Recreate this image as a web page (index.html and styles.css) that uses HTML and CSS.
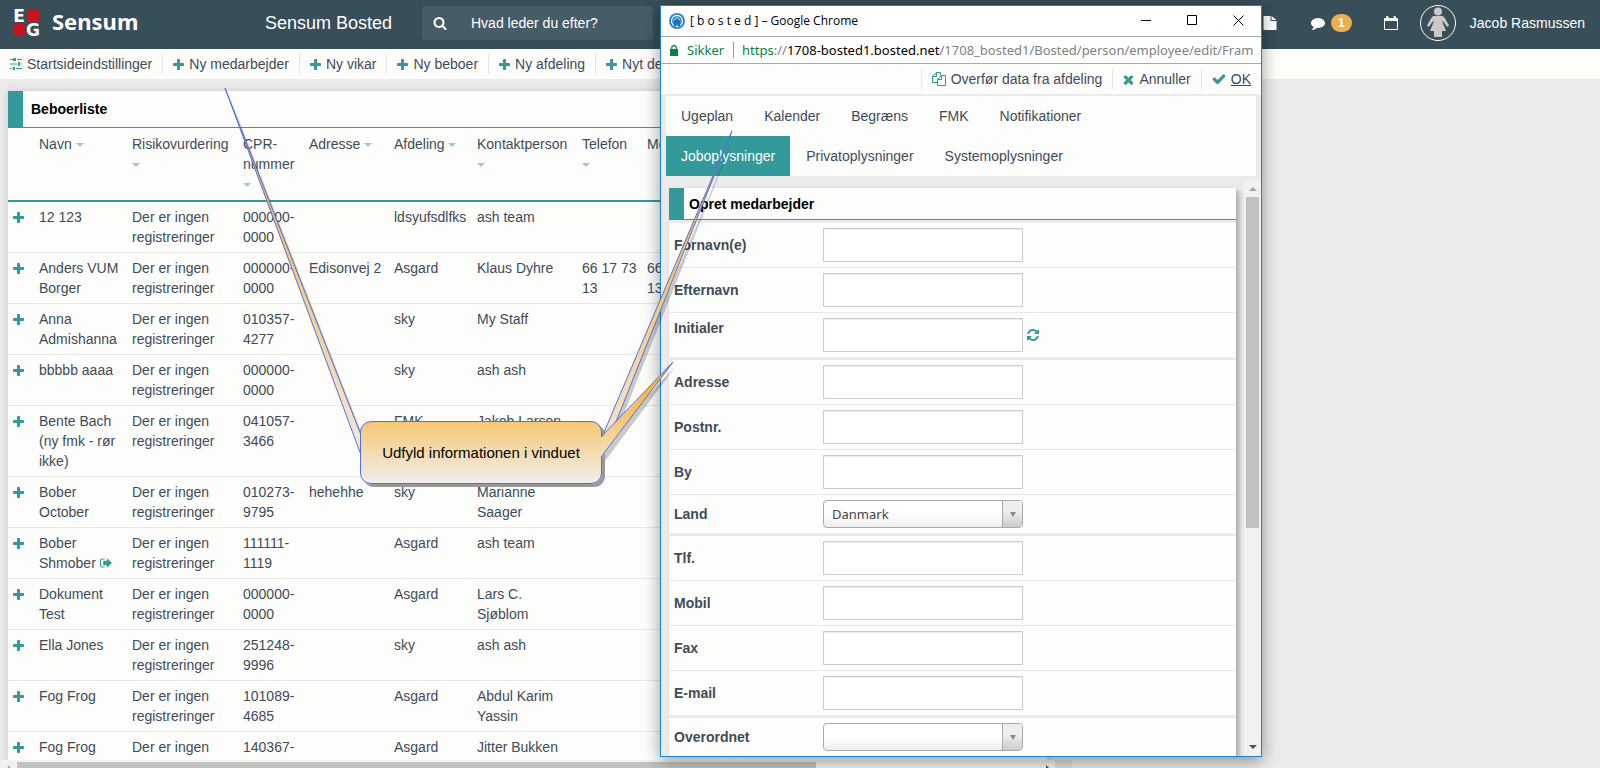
FILE: index.html
```html
<!DOCTYPE html>
<html lang="da">
<head>
<meta charset="utf-8">
<title>Sensum Bosted</title>
<link rel="stylesheet" href="styles.css">
</head>
<body>
<svg class="sprite" aria-hidden="true">
  <symbol id="i-plus" viewBox="192 128 1408 1408"><path d="M1600 736v192q0 40-28 68t-68 28h-416v416q0 40-28 68t-68 28h-192q-40 0-68-28t-28-68v-416h-416q-40 0-68-28t-28-68v-192q0-40 28-68t68-28h416v-416q0-40 28-68t68-28h192q40 0 68 28t28 68v416h416q40 0 68 28t28 68z"/></symbol>
  <symbol id="i-search" viewBox="0 0 1792 1792"><path d="M1216 832q0-185-131.5-316.5t-316.5-131.5-316.5 131.5-131.5 316.5 131.5 316.5 316.5 131.5 316.5-131.5 131.5-316.5zm512 832q0 52-38 90t-90 38q-54 0-90-38l-343-342q-179 124-399 124-143 0-273.5-55.5t-225-150-150-225-55.5-273.5 55.5-273.5 150-225 225-150 273.5-55.5 273.5 55.5 225 150 150 225 55.5 273.5q0 220-124 399l343 343q37 37 37 90z"/></symbol>
  <symbol id="i-check" viewBox="64 64 1664 1664"><path d="M1671 566q0 40-28 68l-724 724-136 136q-28 28-68 28t-68-28l-136-136-362-362q-28-28-28-68t28-68l136-136q28-28 68-28t68 28l294 295 656-657q28-28 68-28t68 28l136 136q28 28 28 68z"/></symbol>
  <symbol id="i-times" viewBox="224 224 1344 1344"><path d="M1490 1322q0 40-28 68l-136 136q-28 28-68 28t-68-28l-294-294-294 294q-28 28-68 28t-68-28l-136-136q-28-28-28-68t28-68l294-294-294-294q-28-28-28-68t28-68l136-136q28-28 68-28t68 28l294 294 294-294q28-28 68-28t68 28l136 136q28 28 28 68t-28 68l-294 294 294 294q28 28 28 68z"/></symbol>
  <symbol id="i-refresh" viewBox="128 128 1536 1536"><path d="M1639 1056q0 5-1 7-64 268-268 434.5t-478 166.5q-146 0-282.5-55t-243.5-157l-129 129q-19 19-45 19t-45-19-19-45v-448q0-26 19-45t45-19h448q26 0 45 19t19 45-19 45l-137 137q71 66 161 102t187 36q134 0 250-65t186-179q11-17 53-117 8-23 30-23h192q13 0 22.500 9.500t9.500 22.500zm25-800v448q0 26-19 45t-45 19h-448q-26 0-45-19t-19-45 19-45l138-138q-148-137-349-137-134 0-250 65t-186 179q-11 17-53 117-8 23-30 23h-199q-13 0-22.500-9.500t-9.500-22.500v-7q65-268 270-434.500t480-166.500q146 0 284 55.500t245 156.500l130-129q19-19 45-19t45 19 19 45z"/></symbol>
  <symbol id="i-comment" viewBox="0 0 1792 1792"><path d="M1792 896q0 174-120 321.5t-326 233-450 85.5q-70 0-145-8-198 175-460 242-49 14-114 22-17 2-30.5-9t-17.5-29v-1q-3-4-.5-12t2-10 4.500-9.500l6-9 7-8.500 8-9q7-8 31-34.500t34.500-38 31-39.500 32.500-51 27-59 26-76q-157-89-247.500-220t-90.500-281q0-130 71-248.500t191-204.500 286-136.500 348-50.500q244 0 450 85.500t326 233 120 321.500z"/></symbol>
  <symbol id="i-sliders" viewBox="0 0 12 12"><path d="M0 1h3v1H0zM7 1h5v1H7zM0 5.500h7v1H0zM11 5.500h1v1h-1zM0 10h2v1H0zM6 10h6v1H6zM3 0h3v3H3zM8 4h2v4H8zM3 9h2v3H3z"/></symbol>
  <symbol id="i-signout" viewBox="0 0 13 12"><path d="M5 1H2.500A2.500 2.500 0 0 0 0 3.500v5A2.500 2.500 0 0 0 2.500 11H5V9.800H2.500A1.300 1.300 0 0 1 1.200 8.500v-5A1.300 1.300 0 0 1 2.500 2.200H5zM7.500 .8 13 6l-5.500 5.200V8.500H3.500v-5h4z"/></symbol>
  <symbol id="i-copy" viewBox="0 0 14 14"><path fill="none" stroke="currentColor" d="M5.500 10.500h-5v-6l4-4h4v3M4.500 .5v4h-4M5.500 7.500l4-4h4v10h-8zM9.500 3.500v4h-4"/></symbol>
  <symbol id="i-file" viewBox="0 0 13 14"><path d="M0 0h7v5h6v9H0zM8 0l5 4H8z"/></symbol>
  <symbol id="i-calendar" viewBox="0 0 14 14"><path d="M0 3q0-1 1-1h1V1q0-1 1.200-1T4.500 1v1h5V1q0-1 1.200-1T12 1v1h1q1 0 1 1v10q0 1-1 1H1q-1 0-1-1zm1 2v8h12V5z" fill-rule="evenodd"/></symbol>
  <symbol id="i-woman" viewBox="0 0 24 32"><circle cx="12" cy="4.500" r="4"/><path d="M8.500 9h7c1.500 0 2.200.6 3 1.800l4.200 7c.7 1.400-1.300 2.600-2.200 1.300L16.500 13.500v1.700L20 24h-4v6h-8v-6H4l3.500-8.800v-1.700L3.500 19.100c-.9 1.300-2.900.1-2.200-1.300l4.200-7C6.300 9.600 7 9 8.500 9z"/></symbol>
</svg>

<header class="topbar">
  <a class="logo" href="#">
    <span class="eg" aria-hidden="true"><b>E</b><i></i><i></i><b>G</b></span>
    <span class="logo-name">Sensum</span>
  </a>
  <h1 class="app-title">Sensum Bosted</h1>
  <label class="search">
    <svg class="icon icon-lg"><use href="#i-search"/></svg>
    <input type="text" placeholder="Hvad leder du efter?" aria-label="Søg">
  </label>
  <div class="user-tools">
    <button class="tool tool-file" aria-label="Dokumenter"><svg class="icon icon-lg"><use href="#i-file"/></svg></button>
    <button class="tool tool-msg" aria-label="Beskeder"><svg class="icon icon-lg"><use href="#i-comment"/></svg><span class="badge">1</span></button>
    <button class="tool tool-cal" aria-label="Kalender"><svg class="icon icon-lg"><use href="#i-calendar"/></svg></button>
    <span class="avatar"><svg><use href="#i-woman"/></svg></span>
    <span class="user-name">Jacob Rasmussen</span>
  </div>
</header>

<nav class="actions">
  <a href="#"><svg class="icon icon-md"><use href="#i-sliders"/></svg>Startsideindstillinger</a>
  <a href="#"><svg class="icon"><use href="#i-plus"/></svg>Ny medarbejder</a>
  <a href="#"><svg class="icon"><use href="#i-plus"/></svg>Ny vikar</a>
  <a href="#"><svg class="icon"><use href="#i-plus"/></svg>Ny beboer</a>
  <a href="#"><svg class="icon"><use href="#i-plus"/></svg>Ny afdeling</a>
  <a href="#"><svg class="icon"><use href="#i-plus"/></svg>Nyt de</a>
</nav>

<main class="frame">
  <div class="frame-body">
    <section class="panel">
      <h2 class="panel-title">Beboerliste</h2>
      <table class="residents">
        <colgroup><col class="c-add"><col class="c-name"><col class="c-risk"><col class="c-cpr"><col class="c-addr"><col class="c-dept"><col class="c-contact"><col class="c-phone"><col></colgroup>
        <thead>
          <tr><th></th><th>Navn <i class="sort"></i></th><th>Risikovurdering <i class="sort"></i></th><th>CPR-nummer <i class="sort"></i></th><th>Adresse <i class="sort"></i></th><th>Afdeling <i class="sort"></i></th><th>Kontaktperson <i class="sort"></i></th><th>Telefon <i class="sort"></i></th><th>Mobil</th></tr>
        </thead>
        <tbody>
          <tr><td><svg class="icon"><use href="#i-plus"/></svg></td><td>12 123</td><td>Der er ingen registreringer</td><td>000000-<wbr>0000</td><td></td><td>ldsyufsdlfks</td><td>ash team</td><td></td><td></td></tr>
          <tr><td><svg class="icon"><use href="#i-plus"/></svg></td><td>Anders VUM Borger</td><td>Der er ingen registreringer</td><td>000000-<wbr>0000</td><td>Edisonvej 2</td><td>Asgard</td><td>Klaus Dyhre</td><td>66 17 73 13</td><td>66 17 73<br>13</td></tr>
          <tr><td><svg class="icon"><use href="#i-plus"/></svg></td><td>Anna Admishanna</td><td>Der er ingen registreringer</td><td>010357-<wbr>4277</td><td></td><td>sky</td><td>My Staff</td><td></td><td></td></tr>
          <tr><td><svg class="icon"><use href="#i-plus"/></svg></td><td>bbbbb aaaa</td><td>Der er ingen registreringer</td><td>000000-<wbr>0000</td><td></td><td>sky</td><td>ash ash</td><td></td><td></td></tr>
          <tr><td><svg class="icon"><use href="#i-plus"/></svg></td><td>Bente Bach (ny fmk - rør ikke)</td><td>Der er ingen registreringer</td><td>041057-<wbr>3466</td><td></td><td>FMK</td><td>Jakob Larsen</td><td></td><td></td></tr>
          <tr><td><svg class="icon"><use href="#i-plus"/></svg></td><td>Bober October</td><td>Der er ingen registreringer</td><td>010273-<wbr>9795</td><td>hehehhe</td><td>sky</td><td>Marianne Saager</td><td></td><td></td></tr>
          <tr><td><svg class="icon"><use href="#i-plus"/></svg></td><td>Bober Shmober <svg class="icon icon-md"><use href="#i-signout"/></svg></td><td>Der er ingen registreringer</td><td>111111-<wbr>1119</td><td></td><td>Asgard</td><td>ash team</td><td></td><td></td></tr>
          <tr><td><svg class="icon"><use href="#i-plus"/></svg></td><td>Dokument Test</td><td>Der er ingen registreringer</td><td>000000-<wbr>0000</td><td></td><td>Asgard</td><td>Lars C. Sjøblom</td><td></td><td></td></tr>
          <tr><td><svg class="icon"><use href="#i-plus"/></svg></td><td>Ella Jones</td><td>Der er ingen registreringer</td><td>251248-<wbr>9996</td><td></td><td>sky</td><td>ash ash</td><td></td><td></td></tr>
          <tr><td><svg class="icon"><use href="#i-plus"/></svg></td><td>Fog Frog</td><td>Der er ingen registreringer</td><td>101089-<wbr>4685</td><td></td><td>Asgard</td><td>Abdul Karim Yassin</td><td></td><td></td></tr>
          <tr><td><svg class="icon"><use href="#i-plus"/></svg></td><td>Fog Frog</td><td>Der er ingen</td><td>140367-</td><td></td><td>Asgard</td><td>Jitter Bukken</td><td></td><td></td></tr>
        </tbody>
      </table>
    </section>
  </div>
  <div class="hscroll"><i class="arrow-left"></i><span class="hthumb"></span><i class="arrow-right"></i><span class="hcorner"></span></div>
</main>

<section class="window" aria-label="Opret medarbejder">
  <header class="win-title">
    <svg class="win-logo" viewBox="0 0 16 16"><circle cx="8" cy="8" r="8" fill="#2b86c3"/><circle cx="8" cy="8" r="5.500" fill="#2b86c3" stroke="#e4f3fc" stroke-width="1.300"/><path d="M8 3.500l4.500 4.500h-1.500v5.500h-2v-3h-2v3H5V8H3.500z" fill="#1273b5"/><path d="M4.500 7.500 8 4.500l3.500 3" fill="none" stroke="#e4f3fc"/></svg>
    <span class="win-name">[ b o s t e d ] – Google Chrome</span>
    <button aria-label="Minimer"><svg viewBox="0 0 11 11"><path d="M0 5.500h10"/></svg></button>
    <button aria-label="Maksimer"><svg viewBox="0 0 11 11"><path d="M.5 .5h9v9h-9z"/></svg></button>
    <button aria-label="Luk"><svg viewBox="0 0 11 11"><path d="M.5 .5l10 10M10.500 .5l-10 10"/></svg></button>
  </header>
  <div class="win-url">
    <svg class="lock" viewBox="0 0 8 11"><path d="M0 4h8v7H0z"/><path d="M1.700 4.500V3a2.300 2.300 0 0 1 4.600 0v1.500" fill="none" stroke="#0b8043" stroke-width="1.200"/></svg>
    <span class="secure">Sikker</span>
    <span class="url"><span class="secure">https</span>://<b>1708-bosted1.bosted.net</b>/1708_bosted1/Bosted/person/employee/edit/Fram</span>
  </div>
  <div class="actions win-actions">
    <a href="#"><svg class="icon icon-lg"><use href="#i-copy"/></svg>Overfør data fra afdeling</a>
    <a href="#"><svg class="icon"><use href="#i-times"/></svg>Annuller</a>
    <a href="#"><svg class="icon icon-lg"><use href="#i-check"/></svg><u>OK</u></a>
  </div>
  <nav class="tabs">
    <a href="#">Ugeplan</a><a href="#">Kalender</a><a href="#">Begræns</a><a href="#">FMK</a><a href="#">Notifikationer</a>
    <a href="#" class="active">Joboplysninger</a><a href="#">Privatoplysninger</a><a href="#">Systemoplysninger</a>
  </nav>
  <div class="win-body">
    <form class="form">
      <h2 class="panel-title form-title">Opret medarbejder</h2>
      <fieldset>
        <div class="row"><label for="fn">Fornavn(e)</label><input id="fn" type="text"></div>
        <div class="row"><label for="en">Efternavn</label><input id="en" type="text"></div>
        <div class="row row-top"><label for="in">Initialer</label><input id="in" type="text"><button type="button" class="refresh" aria-label="Generer initialer"><svg class="icon icon-md"><use href="#i-refresh"/></svg></button></div>
      </fieldset>
      <fieldset>
        <div class="row"><label for="ad">Adresse</label><input id="ad" type="text"></div>
        <div class="row"><label for="pn">Postnr.</label><input id="pn" type="text"></div>
        <div class="row"><label for="by">By</label><input id="by" type="text"></div>
        <div class="row"><label for="ld">Land</label><span class="select"><select id="ld"><option>Danmark</option></select></span></div>
      </fieldset>
      <fieldset>
        <div class="row"><label for="tl">Tlf.</label><input id="tl" type="text"></div>
        <div class="row"><label for="mo">Mobil</label><input id="mo" type="text"></div>
        <div class="row"><label for="fx">Fax</label><input id="fx" type="text"></div>
        <div class="row"><label for="em">E-mail</label><input id="em" type="text"></div>
      </fieldset>
      <fieldset>
        <div class="row"><label for="ov">Overordnet</label><span class="select"><select id="ov"><option></option></select></span></div>
      </fieldset>
    </form>
    <div class="vscroll"><i class="arrow-up"></i><span class="vthumb"></span><i class="arrow-down"></i></div>
  </div>
</section>

<svg class="pointers" width="1600" height="768" aria-hidden="true">
  <defs>
    <linearGradient id="g1" gradientUnits="userSpaceOnUse" x1="0" y1="88" x2="0" y2="455"><stop offset="0" stop-color="#ffa511"/><stop offset="1" stop-color="#f1e9e0"/></linearGradient>
    <linearGradient id="g2" gradientUnits="userSpaceOnUse" x1="0" y1="131" x2="0" y2="457"><stop offset="0" stop-color="#ffa511"/><stop offset="1" stop-color="#f1e9e0"/></linearGradient>
    <linearGradient id="g3" gradientUnits="userSpaceOnUse" x1="0" y1="362" x2="0" y2="482"><stop offset="0" stop-color="#ffa511"/><stop offset="1" stop-color="#f0eeee"/></linearGradient>
  </defs>
  <g class="tail-shadow"><path d="M228 92L364 439V459z"/><path d="M735 135L605 441V461z"/><path d="M676 366L605 441V461z"/></g>
  <g class="tail"><path d="M225 88L361 435V455z" fill="url(#g1)"/><path d="M732 131L602 437V457z" fill="url(#g2)"/></g>
</svg>
<div class="callout">Udfyld informationen i vinduet</div>
<svg class="pointers" width="1600" height="768" aria-hidden="true">
  <path d="M600 437L602 437L673 362L602 457L600 457z" fill="url(#g3)"/><path class="tail-line" d="M601 437L673 362L601 457"/>
</svg>
</body>
</html>
```
FILE: styles.css
```css
* { box-sizing: border-box; }

body {
  margin: 0;
  height: 100vh;
  display: flex;
  flex-direction: column;
  position: relative;
  overflow: hidden;
  background: #ebebeb;
  color: #3f4b57;
  font: 14px/20px "Liberation Sans", Arial, sans-serif;
}

a { color: inherit; text-decoration: none; }
button { padding: 0; border: 0; background: none; color: inherit; font: inherit; }
h1, h2 { margin: 0; font-size: 14px; }
.sprite { position: absolute; width: 0; height: 0; }
.icon { width: 11px; height: 11px; flex: none; fill: currentColor; color: #339999; }
.icon-md { width: 12px; height: 12px; }
.icon-lg { width: 14px; height: 14px; }

/* Top bar */
.topbar { flex: none; height: 49px; display: flex; align-items: center; background: #384e59; color: #fff; padding: 0 15px 3px 13px; }
.topbar .icon { color: #fff; }
.logo { display: flex; align-items: center; gap: 13px; width: 252px; }
.eg { display: grid; grid-template-columns: 12px 12px; grid-template-rows: 12px 12px; gap: 2px; }
.eg i { background: #c4161c; }
.eg b { display: flex; justify-content: center; font: bold 17px/13px "DejaVu Sans", sans-serif; }
.logo-name { padding-bottom: 4px; font: bold 22px/28px "Noto Sans", sans-serif; }
.app-title { font-weight: normal; font-size: 18px; width: 157px; white-space: nowrap; }
.search { display: flex; align-items: center; width: 231px; height: 34px; border-radius: 3px; background: #465c66; padding-left: 11px; gap: 24px; }
.search input { flex: 1; min-width: 0; border: 0; background: none; color: #fff; font: inherit; padding: 0; outline: 0; }
.search input::placeholder { color: #fff; opacity: 1; }
.user-tools { margin-left: auto; display: flex; align-items: center; }
.tool { display: flex; align-items: center; }
.tool-file { margin-right: 34px; }
.tool-msg { gap: 6px; margin-right: 32px; }
.tool-cal { margin-right: 22px; }
.badge { width: 21px; height: 18px; border-radius: 9px; background: #f0ad4e; font: bold 12px/18px "Liberation Sans", Arial, sans-serif; text-align: center; }
.avatar { display: flex; align-items: center; justify-content: center; width: 36px; height: 36px; border: 1px solid #fff; border-radius: 50%; margin-right: 14px; }
.avatar svg { width: 24px; height: 32px; fill: #c9c9c9; }

/* Action rows */
.actions { flex: none; display: flex; align-items: center; height: 30px; background: #fdfdfb; }
.actions a { display: flex; align-items: center; gap: 5px; height: 20px; padding: 0 10px; border-right: 1px solid #e6e6e6; white-space: nowrap; }
.actions a:last-child { border-right: 0; }

/* Resident list */
.frame { flex: 1; min-height: 0; width: 67%; display: flex; flex-direction: column; }
.frame-body { flex: 1; min-height: 0; overflow: hidden; padding: 12px 25px 0 8px; }
.panel { background: #fdfdfb; box-shadow: 0 0 8px rgba(0, 0, 0, .15); }
.panel-title { border-left: 15px solid #339999; padding: 8px 8px 9px; line-height: 20px; color: #000; box-shadow: inset 0 -1px #339999; }
.residents { width: 100%; table-layout: fixed; border-collapse: separate; border-spacing: 0; }
.residents th { font-weight: normal; text-align: left; vertical-align: top; padding: 6px 5px; border-bottom: 2px solid #339999; }
.residents td { vertical-align: top; padding: 5px; border-bottom: 1px solid #e8e8e8; }
.residents .icon { vertical-align: -1px; }
.c-add { width: 26px; }
.c-name { width: 93px; }
.c-risk { width: 111px; }
.c-cpr { width: 66px; }
.c-addr { width: 85px; }
.c-dept { width: 83px; }
.c-contact { width: 105px; }
.c-phone { width: 65px; }
.sort { display: inline-block; border: 4px solid transparent; border-top-color: #99cccc; border-bottom: 0; vertical-align: 2px; }
.hscroll { flex: none; display: flex; align-items: flex-end; height: 8px; background: #f1f1f1; }
.hthumb { width: 799px; height: 6px; background: #c1c1c1; margin-left: 7px; }
.arrow-left { border: 3px solid transparent; border-right-color: #a3a3a3; border-left: 0; border-bottom: 0; margin-left: 7px; }
.arrow-right { margin-left: auto; border: 3px solid transparent; border-left-color: #505050; border-right: 0; border-bottom: 0; }
.hcorner { width: 17px; height: 8px; margin-left: 6px; background: #dcdcdc; }

/* Browser window */
.window { position: absolute; left: 660px; top: 5px; width: 602px; bottom: 11px; display: flex; flex-direction: column; overflow: hidden; border: 1px solid #1883d7; background: #ebebeb; box-shadow: 0 4px 16px rgba(0, 0, 0, .4); }
.win-title { flex: none; display: flex; align-items: center; height: 31px; padding: 0 17px 1px 8px; background: #fff; border-bottom: 1px solid #a9a9a9; color: #000; font: 12px/20px "Open Sans", sans-serif; }
.win-logo { width: 16px; height: 16px; margin-right: 5px; }
.win-name { margin-right: auto; }
.win-title button { display: flex; margin-left: 35px; }
.win-title button svg { width: 11px; height: 11px; fill: none; stroke: #000; }
.win-url { flex: none; display: flex; align-items: center; height: 27px; padding: 0 4px 0 9px; background: #fff; border-bottom: 1px solid #a9a9a9; color: #808080; font: 13px/20px "Noto Sans", sans-serif; }
.lock { width: 8px; height: 11px; margin-right: 9px; fill: #0b8043; flex: none; }
.secure { color: #0b8043; }
.url { margin-left: 9px; padding-left: 8px; height: 16px; line-height: 16px; border-left: 1px solid #999; white-space: nowrap; }
.url b { font-weight: normal; color: #000; }
.win-actions { justify-content: flex-end; }
.win-actions a:first-child { border-left: 1px solid #e6e6e6; }
.tabs { flex: none; display: flex; flex-wrap: wrap; column-gap: 1px; margin: 2px 5px 0; padding-right: 100px; background: #fdfdfb; }
.tabs a { padding: 10px 15px; }
.tabs .active { background: #339999; color: #fff; }
.win-body { flex: 1; min-height: 0; display: flex; margin-top: 4px; }
.form { flex: 1; align-self: flex-start; margin: 8px 8px 0; background: #fdfdfb; box-shadow: 3px 3px 5px rgba(0, 0, 0, .3); }
.form-title { padding: 6px 5px; }
fieldset { margin: 0; padding: 0; border: 0; border-top: 3px solid #ebebeb; min-width: 0; }
.row { display: flex; align-items: center; padding: 5px; border-bottom: 1px solid #e8e8e8; }
.row:last-child { border-bottom: 0; }
.row label { width: 149px; font-weight: bold; }
.row-top { align-items: flex-start; }
.row input { width: 200px; height: 34px; border: 1px solid #ccc; background: #fff; box-shadow: inset 0 1px 1px rgba(0, 0, 0, .08); padding: 6px 8px; font: inherit; }
.refresh { height: 34px; margin-left: 4px; display: flex; align-items: center; }
.select { display: flex; position: relative; width: 200px; }
.select select { appearance: none; width: 100%; height: 28px; margin: 0; padding: 0 8px; border: 1px solid #aaa; border-radius: 4px; background: linear-gradient(#fff 50%, #eee); color: #444; font: 13px/26px "Noto Sans", sans-serif; }
.select::before { content: ""; position: absolute; right: 1px; top: 1px; bottom: 1px; width: 19px; border-left: 1px solid #aaa; border-radius: 0 3px 3px 0; background: linear-gradient(#eee 40%, #ccc); }
.select::after { content: ""; position: absolute; right: 7px; top: 12px; border: 3px solid transparent; border-top: 5px solid #888; border-bottom: 0; }
.vscroll { flex: none; width: 17px; background: #f1f1f1; display: flex; flex-direction: column; align-items: center; padding: 7px 0; }
.vthumb { width: 13px; flex: 0 0 331px; background: #c1c1c1; margin-top: 6px; }
.arrow-up { border: 4px solid transparent; border-bottom-color: #a3a3a3; border-top: 0; }
.arrow-down { border: 4px solid transparent; border-top-color: #505050; border-bottom: 0; margin-top: auto; }

/* Callout */
.pointers { position: absolute; left: 0; top: 0; pointer-events: none; }
.tail path, .tail-line { stroke: #4f71db; stroke-width: 1; }
.tail-line { fill: none; }
.tail-shadow { fill: #000; opacity: .2; }
.callout { position: absolute; left: 360px; top: 421px; width: 242px; padding: 21px 0 20px; border: 1px solid #4f71db; border-radius: 11px; background: linear-gradient(#f7c873, #f0eeee); box-shadow: 3px 3px 0 #999; color: #000; font-size: 15px; text-align: center; }
```
